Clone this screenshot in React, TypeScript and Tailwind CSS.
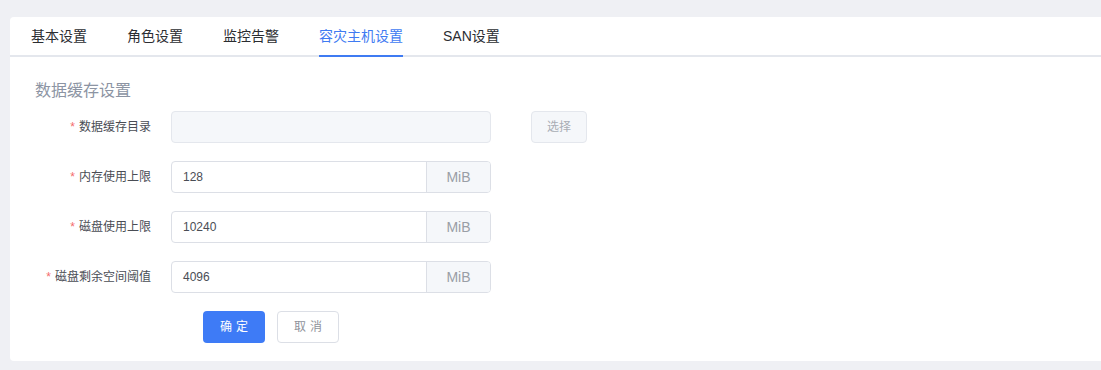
import React from 'react';

const tabs = ['基本设置', '角色设置', '监控告警', '容灾主机设置', 'SAN设置'];

const rows = [
  { label: '内存使用上限', value: '128' },
  { label: '磁盘使用上限', value: '10240' },
  { label: '磁盘剩余空间阈值', value: '4096' },
];

const FormLabel: React.FC<{ text: string }> = ({ text }) => (
  <div className="w-[136px] shrink-0 pr-5 flex items-center justify-end text-[12px] text-[#4a4d55]">
    <span className="text-[#f56c6c] mr-[4px]">*</span>
    {text}
  </div>
);

export default function App() {
  return (
    <div
      className="min-h-[370px] bg-[#eff0f4] pl-[10px] pt-[17px] pb-[9px]"
      style={{ fontFamily: '"Liberation Sans", "Noto Sans CJK SC", sans-serif' }}
    >
      <div className="bg-white rounded-l-[4px]">
        <div className="flex h-[40px] pl-[1px] border-b-2 border-[#e4e7ed]">
          {tabs.map((t, i) => (
            <div
              key={t}
              className={
                'relative h-full flex items-center px-5 pt-[1px] text-[14px] ' +
                (i === 3 ? 'text-[#3f7bf2]' : 'text-[#2b2d31]')
              }
            >
              {t}
              {i === 3 && <span className="absolute left-5 right-5 bottom-[-2px] h-[2px] bg-[#3f7bf2]" />}
            </div>
          ))}
        </div>

        <div className="pl-[25px] pt-[23px] pb-[18px]">
          <div className="text-[16px] leading-[22px] text-[#8c94a3] mb-[9px]">数据缓存设置</div>

          <div className="flex h-8 mb-[18px]">
            <FormLabel text="数据缓存目录" />
            <div className="w-[320px] h-8 rounded-[4px] border border-[#e4e7ed] bg-[#f5f7fa]" />
            <button className="ml-10 w-[56px] h-8 rounded-[4px] border border-[#e4e7ed] bg-[#f5f7fa] text-[12px] text-[#a9adb4]">
              选择
            </button>
          </div>

          {rows.map((r) => (
            <div key={r.label} className="flex h-8 mb-[18px]">
              <FormLabel text={r.label} />
              <div className="w-[320px] h-8 flex rounded-[4px] border border-[#dcdfe6] overflow-hidden">
                <div className="flex-1 flex items-center pl-[11px] text-[12px] text-[#4a4d55]">{r.value}</div>
                <div className="w-[64px] flex items-center justify-center border-l border-[#dcdfe6] bg-[#f5f7fa] text-[14px] text-[#9a9ea6]">
                  MiB
                </div>
              </div>
            </div>
          ))}

          <div className="flex h-8 pl-[168px] gap-3">
            <button className="w-[62px] h-8 rounded-[4px] bg-[#3e7bf6] text-white text-[12px] tracking-[4px] pl-[4px]">
              确定
            </button>
            <button className="w-[62px] h-8 rounded-[4px] border border-[#dcdfe6] bg-white text-[#8f939b] text-[12px] tracking-[4px] pl-[4px]">
              取消
            </button>
          </div>
        </div>
      </div>
    </div>
  );
}
